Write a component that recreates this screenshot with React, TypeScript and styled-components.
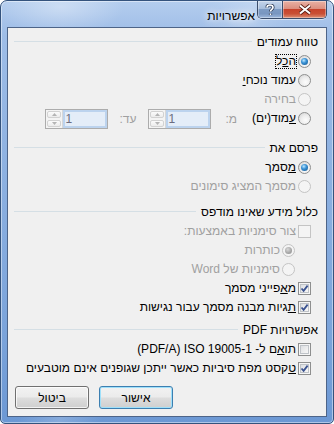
import styled, { createGlobalStyle, css } from 'styled-components'

const GlobalStyle = createGlobalStyle`
  html, body {
    margin: 0;
    padding: 0;
    background: #ffffff;
  }
  body {
    font-family: "Liberation Sans", Arial, sans-serif;
    font-size: 12px;
    color: #000;
  }
`

const Window = styled.div`
  width: 334px;
  height: 424px;
  box-sizing: border-box;
  border: 1px solid #34537d;
  border-radius: 7px 7px 5px 5px;
  padding: 0 6px 6px;
  display: flex;
  flex-direction: column;
  background:
    radial-gradient(ellipse 90px 40px at 60px 6px, rgba(255, 255, 255, 0.35), rgba(255, 255, 255, 0) 70%),
    linear-gradient(115deg, rgba(255, 255, 255, 0) 40%, rgba(255, 255, 255, 0.18) 48%, rgba(255, 255, 255, 0) 56%),
    linear-gradient(180deg, #b4cdee 0%, #9ebde7 8%, #8db1e1 40%, #7aa3da 80%, #6c98d4 100%);
  box-shadow: inset 0 0 0 1px rgba(255, 255, 255, 0.45);
`

const TitleBar = styled.div`
  height: 26px;
  display: flex;
  justify-content: flex-end;
  align-items: flex-start;
`

const Title = styled.div`
  font-size: 12px;
  line-height: 14px;
  margin-top: 8px;
  margin-right: 2px;
  color: #000;
  text-shadow: 0 0 6px #fff, 0 0 10px rgba(255, 255, 255, 0.9);
`

const CaptionButtons = styled.div`
  display: flex;
  height: 17px;
  border: 1px solid #3b4d6b;
  border-top: none;
  border-radius: 0 0 5px 5px;
  overflow: hidden;
  box-shadow: 0 1px 0 rgba(255, 255, 255, 0.5);
`

const CaptionButton = styled.div<{ $close?: boolean }>`
  display: flex;
  align-items: center;
  justify-content: center;
  width: ${(p) => (p.$close ? 43 : 24)}px;
  box-shadow: inset 0 0 0 1px rgba(255, 255, 255, 0.35);
  ${(p) =>
    p.$close
      ? css`
          background: linear-gradient(180deg, #e9b1a4 0%, #dc8f7f 45%, #c7432b 50%, #c94f35 75%, #dc8f74 100%);
        `
      : css`
          border-right: 1px solid #3b4d6b;
          background: linear-gradient(180deg, #c4d4ea 0%, #a7bedc 45%, #7d9bc4 50%, #7996c0 75%, #9fb9dd 100%);
        `}
`

const Client = styled.div`
  flex: 1;
  direction: rtl;
  background: #f0f0f0;
  border: 1px solid #4d6488;
  padding: 3px 8px 0 6px;
  display: flex;
  flex-direction: column;
`

const Section = styled.div<{ $gap?: number }>`
  display: flex;
  flex-direction: column;
  margin-top: ${(p) => p.$gap ?? 0}px;
`

const Heading = styled.div`
  height: 21px;
  display: flex;
  align-items: center;
  gap: 5px;
  white-space: nowrap;

  &::after {
    content: '';
    flex: 1;
    height: 1px;
    background: #d5dfe5;
  }
`

const Row = styled.div<{ $indent?: number }>`
  height: 19px;
  display: flex;
  align-items: center;
  gap: 1px;
  padding-right: ${(p) => 7 + (p.$indent ?? 0)}px;
  white-space: nowrap;
`

const Label = styled.span<{ $disabled?: boolean; $focused?: boolean }>`
  border: 1px ${(p) => (p.$focused ? 'dotted #000' : 'solid transparent')};
  line-height: 13px;
  color: ${(p) => (p.$disabled ? '#a0a0a0' : '#000')};
`

const Radio = styled.span<{ $checked?: boolean; $disabled?: boolean }>`
  position: relative;
  flex: none;
  width: 13px;
  height: 13px;
  box-sizing: border-box;
  border-radius: 50%;
  border: 1px solid ${(p) => (p.$disabled ? '#c4c4c4' : '#8e8f8f')};
  background: ${(p) =>
    p.$disabled
      ? '#f4f4f4'
      : 'radial-gradient(circle at 60% 65%, #fcfcfc 0%, #eeeeee 45%, #cfcfcf 100%)'};

  ${(p) =>
    p.$checked &&
    css`
      &::after {
        content: '';
        position: absolute;
        left: 2px;
        top: 2px;
        width: 7px;
        height: 7px;
        border-radius: 50%;
        background: ${p.$disabled
          ? 'radial-gradient(circle at 40% 35%, #d8d8d8 0%, #a8a8a8 55%, #8c8c8c 100%)'
          : 'radial-gradient(circle at 40% 35%, #bfe8ff 0%, #3b93d6 40%, #0f4f86 100%)'};
      }
    `}
`

const Box = styled.span<{ $disabled?: boolean }>`
  flex: none;
  width: 13px;
  height: 13px;
  box-sizing: border-box;
  display: flex;
  align-items: center;
  justify-content: center;
  border: 1px solid ${(p) => (p.$disabled ? '#c4c4c4' : '#8e8f8f')};
  background: ${(p) => (p.$disabled ? '#f4f4f4' : 'linear-gradient(135deg, #d5d8dc 0%, #f3f3f3 70%, #fbfbfb 100%)')};
  box-shadow: ${(p) => (p.$disabled ? 'none' : 'inset 0 0 0 1px #f6f6f6, inset 0 0 0 2px #bfc3c8')};
`

const RangeText = styled.span<{ $space: number }>`
  margin-right: ${(p) => p.$space}px;
  color: #a0a0a0;
`

const Spinner = styled.div<{ $space: number }>`
  direction: ltr;
  margin-right: ${(p) => p.$space}px;
  width: 63px;
  height: 20px;
  box-sizing: border-box;
  border: 1px solid #acacac;
  display: flex;
`

const SpinButtons = styled.div`
  width: 16px;
  display: flex;
  flex-direction: column;
  background: #f4f4f4;
  border-right: 1px solid #d7d7d7;
`

const SpinHalf = styled.div`
  flex: 1;
  display: flex;
  align-items: center;
  justify-content: center;
  margin: 1px;
  border: 1px solid #d2d2d2;
  border-radius: 2px;
  background: linear-gradient(180deg, #fbfbfb, #ececec);
`

const SpinValue = styled.div`
  flex: 1;
  display: flex;
  align-items: center;
  padding-left: 2px;
  color: #6c6c80;
  background: #e4edf8;
  box-shadow: inset 0 0 0 2px #bcd3ee;
`

const ButtonRow = styled.div`
  display: flex;
  justify-content: flex-end;
  gap: 10px;
  margin-top: 8px;
  padding-left: 1px;
`

const PushButton = styled.div<{ $default?: boolean }>`
  width: 74px;
  height: 23px;
  box-sizing: border-box;
  display: flex;
  align-items: center;
  justify-content: center;
  border-radius: 3px;
  border: 1px solid ${(p) => (p.$default ? '#3c7fb1' : '#707070')};
  background: linear-gradient(180deg, #f2f2f2 0%, #ebebeb 48%, #dddddd 52%, #cfcfcf 100%);
  box-shadow: inset 0 0 0 1px ${(p) => (p.$default ? '#9fe0fa' : 'rgba(255, 255, 255, 0.75)')};
`

function CheckMark() {
  return (
    <svg width="9" height="9" viewBox="0 0 9 9">
      <path d="M1.5 4.5 L3.6 6.8 L7.6 1.6" fill="none" stroke="#3a5290" strokeWidth="1.8" />
    </svg>
  )
}

function Arrow({ down }: { down?: boolean }) {
  return (
    <svg width="5" height="3" viewBox="0 0 5 3">
      <path d={down ? 'M0 0 H5 L2.5 3 Z' : 'M0 3 H5 L2.5 0 Z'} fill="#b4b4b4" />
    </svg>
  )
}

function SpinBox({ space }: { space: number }) {
  return (
    <Spinner $space={space}>
      <SpinButtons>
        <SpinHalf>
          <Arrow />
        </SpinHalf>
        <SpinHalf>
          <Arrow down />
        </SpinHalf>
      </SpinButtons>
      <SpinValue>1</SpinValue>
    </Spinner>
  )
}

type OptionProps = {
  children: React.ReactNode
  checked?: boolean
  disabled?: boolean
  focused?: boolean
  indent?: number
}

function RadioRow({ children, checked, disabled, focused, indent }: OptionProps) {
  return (
    <Row $indent={indent}>
      <Radio $checked={checked} $disabled={disabled} />
      <Label $disabled={disabled} $focused={focused}>
        {children}
      </Label>
    </Row>
  )
}

function CheckRow({ children, checked, disabled }: OptionProps) {
  return (
    <Row>
      <Box $disabled={disabled}>{checked && <CheckMark />}</Box>
      <Label $disabled={disabled}>{children}</Label>
    </Row>
  )
}

export default function App() {
  return (
    <>
      <GlobalStyle />
      <Window>
        <TitleBar>
          <Title>אפשרויות</Title>
          <CaptionButtons>
            <CaptionButton>
              <svg width="10" height="12" viewBox="0 0 10 12">
                <path
                  d="M2 3.5 C2 1.5 3.5 1 5 1 C6.8 1 8 2 8 3.5 C8 5.2 5.5 5.6 5.5 7.5 M5.5 9.5 V11"
                  fill="none"
                  stroke="#2c3a55"
                  strokeWidth="3.2"
                />
                <path
                  d="M2 3.5 C2 1.5 3.5 1 5 1 C6.8 1 8 2 8 3.5 C8 5.2 5.5 5.6 5.5 7.5 M5.5 9.5 V11"
                  fill="none"
                  stroke="#ffffff"
                  strokeWidth="1.6"
                />
              </svg>
            </CaptionButton>
            <CaptionButton $close>
              <svg width="14" height="11" viewBox="0 0 14 11">
                <path d="M2 1.5 L12 9.5 M12 1.5 L2 9.5" stroke="#5a1e14" strokeWidth="3.6" />
                <path d="M2 1.5 L12 9.5 M12 1.5 L2 9.5" stroke="#ffffff" strokeWidth="2" />
              </svg>
            </CaptionButton>
          </CaptionButtons>
        </TitleBar>

        <Client>
          <Section>
            <Heading>טווח עמודים</Heading>
            <RadioRow checked focused>
              ה<u>כ</u>ל
            </RadioRow>
            <RadioRow>
              עמוד נוכח<u>י</u>
            </RadioRow>
            <RadioRow disabled>בחירה</RadioRow>
            <Row>
              <Radio />
              <Label>
                <u>ע</u>מוד(ים)
              </Label>
              <RangeText $space={13}>מ:</RangeText>
              <SpinBox space={13} />
              <RangeText $space={11}>עד:</RangeText>
              <SpinBox space={10} />
            </Row>
          </Section>

          <Section $gap={9}>
            <Heading>פרסם את</Heading>
            <RadioRow checked>
              <u>מ</u>סמך
            </RadioRow>
            <RadioRow disabled>מסמך המציג סימונים</RadioRow>
          </Section>

          <Section $gap={5}>
            <Heading>כלול מידע שאינו מודפס</Heading>
            <CheckRow disabled>צור סימניות באמצעות:</CheckRow>
            <RadioRow checked disabled indent={16}>
              כותרות
            </RadioRow>
            <RadioRow disabled indent={16}>
              סימניות של Word
            </RadioRow>
            <CheckRow checked>
              מ<u>א</u>פייני מסמך
            </CheckRow>
            <CheckRow checked>
              <u>ת</u>גיות מבנה מסמך עבור נגישות
            </CheckRow>
          </Section>

          <Section $gap={2}>
            <Heading>אפשרויות PDF</Heading>
            <CheckRow>
              תו<u>א</u>ם ל- <bdi dir="ltr">ISO 19005-1</bdi> <bdi dir="ltr">(PDF/A)</bdi>
            </CheckRow>
            <CheckRow checked>
              <u>ט</u>קסט מפת סיביות כאשר ייתכן שגופנים אינם מוטבעים
            </CheckRow>
          </Section>

          <ButtonRow>
            <PushButton $default>אישור</PushButton>
            <PushButton>ביטול</PushButton>
          </ButtonRow>
        </Client>
      </Window>
    </>
  )
}
